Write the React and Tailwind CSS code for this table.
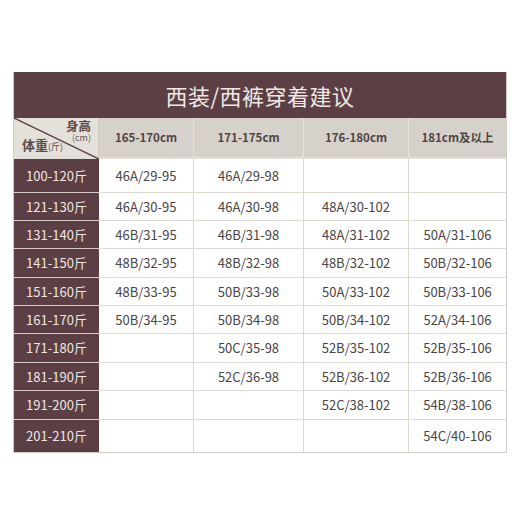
const heights = ['165-170cm', '171-175cm', '176-180cm', '181cm及以上'];

const rows = [
  ['100-120斤', '46A/29-95', '46A/29-98', '', ''],
  ['121-130斤', '46A/30-95', '46A/30-98', '48A/30-102', ''],
  ['131-140斤', '46B/31-95', '46B/31-98', '48A/31-102', '50A/31-106'],
  ['141-150斤', '48B/32-95', '48B/32-98', '48B/32-102', '50B/32-106'],
  ['151-160斤', '48B/33-95', '50B/33-98', '50A/33-102', '50B/33-106'],
  ['161-170斤', '50B/34-95', '50B/34-98', '50B/34-102', '52A/34-106'],
  ['171-180斤', '', '50C/35-98', '52B/35-102', '52B/35-106'],
  ['181-190斤', '', '52C/36-98', '52B/36-102', '52B/36-106'],
  ['191-200斤', '', '', '52C/38-102', '54B/38-106'],
  ['201-210斤', '', '', '', '54C/40-106'],
];

const rowHeights = ['h-[34px]', 'h-[28px]', 'h-[28px]', 'h-[29px]', 'h-[28px]', 'h-[28px]', 'h-[29px]', 'h-[28px]', 'h-[29px]', 'h-[32px]'];

const font = { fontFamily: "'Noto Sans CJK SC', 'Noto Sans', sans-serif" };

export default function App() {
  return (
    <div className="w-[520px] h-[520px] bg-white pt-[72px] px-[13px]" style={font}>
      <div className="w-[494px] border border-[#cfcbc5] border-t-0">
        <div className="h-[46px] bg-[#5b3f44] flex items-center justify-center text-[22px] text-[#f1e8e4] tracking-[0.5px]">
          西装/西裤穿着建议
        </div>
        <div className="flex h-[41px] border-b-2 border-[#e2ded8]">
          <div className="relative w-[85px] shrink-0 bg-[#e4e0da] border-r border-[#cfc9c2]">
            <svg className="absolute inset-0" width="85" height="41" viewBox="0 0 85 41">
              <line x1="0" y1="0" x2="85" y2="41" stroke="#5b3f44" strokeWidth="1.4" />
            </svg>
            <div className="absolute right-[7px] top-[1px] flex flex-col items-end">
              <span className="text-[12.5px] leading-[14px] font-bold text-[#5b4a4a]">身高</span>
              <span className="text-[9px] leading-[10px] text-[#6a5a5a]">(cm)</span>
            </div>
            <div className="absolute left-[8px] bottom-[3px] leading-[14px] text-[#5b4a4a]">
              <span className="text-[13px] font-bold">体重</span>
              <span className="text-[9px]">(斤)</span>
            </div>
          </div>
          {heights.map((h, i) => (
            <div
              key={h}
              className={`${['w-[95px]', 'w-[110px]', 'w-[105px]', 'flex-1'][i]} bg-[#d6d1ca] flex items-center justify-center text-[11.5px] font-bold text-[#4f4444] ${i < 3 ? 'border-r border-[#e6e2dc]' : ''}`}
            >
              {h}
            </div>
          ))}
        </div>
        {rows.map((r, ri) => (
          <div key={r[0]} className={`flex ${rowHeights[ri]} ${ri < rows.length - 1 ? 'border-b border-[#e0dcd5]' : ''}`}>
            <div
              className={`w-[85px] shrink-0 bg-[#5b3f44] flex items-center justify-center text-[13px] text-[#efe6e2] ${ri < rows.length - 1 ? 'border-b border-[#d8ccc8] -mb-px' : ''}`}
            >
              {r[0]}
            </div>
            {r.slice(1).map((c, ci) => (
              <div
                key={ci}
                className={`${['w-[95px]', 'w-[110px]', 'w-[105px]', 'flex-1'][ci]} flex items-center justify-center text-[13px] text-[#4a4444] ${ci < 3 ? 'border-r border-[#dcd8d0]' : ''}`}
              >
                {c}
              </div>
            ))}
          </div>
        ))}
      </div>
    </div>
  );
}
